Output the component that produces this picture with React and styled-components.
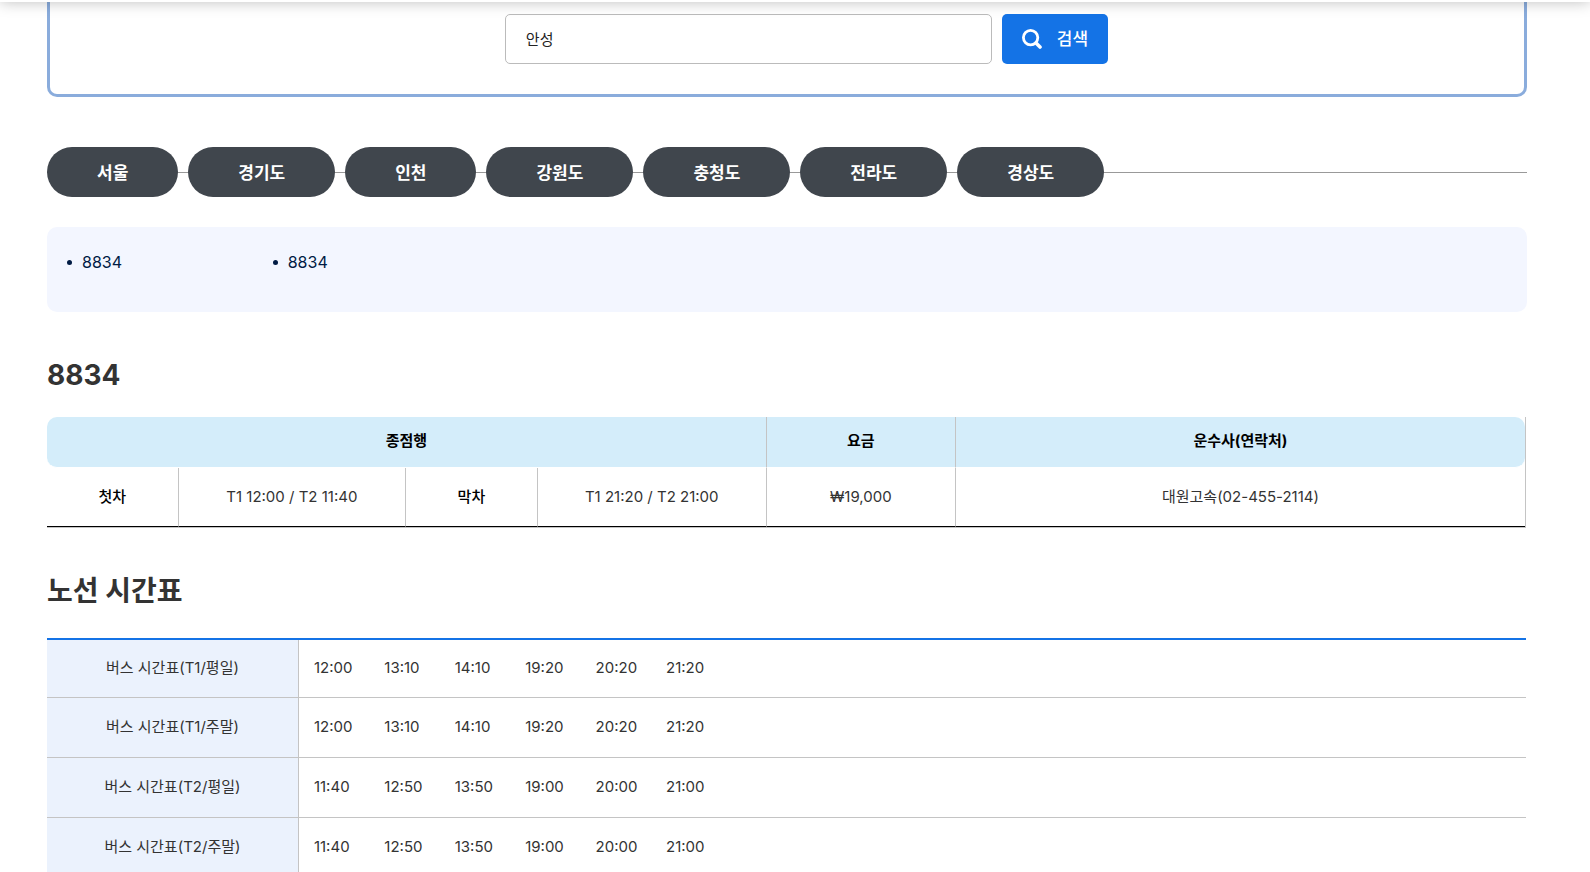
import React from "react";
import styled, { createGlobalStyle } from "styled-components";

const GlobalStyle = createGlobalStyle`
  *, *::before, *::after { box-sizing: border-box; }
  body {
    margin: 0;
    background: #fff;
    color: #333;
    font-family: Inter, "Noto Sans CJK KR", sans-serif;
    font-size: 15px;
    line-height: 24px;
  }
  button, input { font: inherit; }
`;

const Header = styled.header`
  position: sticky;
  top: -60px;
  z-index: 1;
  height: 62px;
  margin-top: -60px;
  background: #fff;
  box-shadow: 0 0 14px rgba(0, 0, 0, 0.26);
`;

const Main = styled.main`
  padding: 0 63px 40px 47px;
`;

const SearchBox = styled.form`
  display: flex;
  justify-content: center;
  gap: 10px;
  padding: 12px 0 30px 39px;
  border: 3px solid #8aacdc;
  border-top: 0;
  border-radius: 0 0 10px 10px;
`;

const SearchInput = styled.input`
  flex: 0 1 487px;
  min-width: 0;
  height: 50px;
  padding: 0 20px 2px;
  border: 1px solid #bbb;
  border-radius: 5px;
  background: #fff;
  color: #222;
`;

const SearchButton = styled.button`
  display: flex;
  align-items: center;
  gap: 15px;
  height: 50px;
  padding: 0 20px;
  border: 0;
  border-radius: 5px;
  background: #1473e6;
  color: #fff;
  font-size: 17px;
  font-weight: 500;
  white-space: nowrap;
`;

const Regions = styled.nav`
  display: flex;
  align-items: center;
  gap: 10px;
  margin-top: 50px;
  background: linear-gradient(#999, #999) 0 25px / 100% 1px no-repeat;
`;

const RegionLink = styled.a`
  padding: 14px 50px 12px;
  border-radius: 25px;
  background: #40464d;
  color: #fff;
  font-size: 17px;
  font-weight: 700;
  text-decoration: none;
  white-space: nowrap;
`;

const RouteList = styled.ul`
  display: grid;
  grid-template-columns: repeat(7, 1fr);
  margin: 30px 0 0;
  padding: 23px 20px 38px;
  border-radius: 10px;
  background: #f3f6ff;
  list-style: none;
`;

const RouteItem = styled.li`
  display: flex;
  align-items: center;
  gap: 10px;

  &::before {
    content: "";
    width: 5px;
    height: 5px;
    border-radius: 50%;
    background: #001b44;
  }
`;

const RouteLink = styled.a`
  color: #001b44;
  font-size: 16px;
  text-decoration: none;
`;

const Title = styled.h2`
  margin: 43px 0 ${(p) => p.$gap};
  font-size: 28px;
  font-weight: 700;
  line-height: 40px;
`;

const InfoTable = styled.table`
  width: calc(100% - 1px);
  table-layout: fixed;
  border-spacing: 0;
  border-right: 1px solid #c4c4c4;
  border-bottom: 1px solid #c4c4c4;
  text-align: center;
`;

const Col = styled.col`
  width: ${(p) => p.$width};
`;

const InfoHead = styled.th`
  height: 51px;
  padding: 0 0 2px;
  border-right: 1px solid #c4c4c4;
  border-bottom: 1px solid #fff;
  background: #d4edfa;
  color: #000;
  font-weight: 700;

  &:first-child { border-radius: 10px 0 0 10px; }
  &:last-child { border-right: 0; border-radius: 0 10px 10px 0; }
`;

const InfoCell = styled.td`
  height: 59px;
  padding: 0;
  border-right: 1px solid #c4c4c4;
  border-bottom: 1px solid #000;
  color: ${(p) => (p.$label ? "#000" : "#333")};
  font-weight: ${(p) => (p.$label ? 500 : 400)};

  &:last-child { border-right: 0; }
`;

const TimeTable = styled.table`
  width: calc(100% - 1px);
  table-layout: fixed;
  border-collapse: collapse;
  border-top: 2px solid #1473e6;
`;

const TimeHead = styled.th`
  height: 60px;
  padding: 0;
  border-right: 1px solid #c4c4c4;
  border-bottom: 1px solid #c4c4c4;
  background: #ebf2fd;
  font-weight: 400;

  tr:first-child > & { height: 58px; }
`;

const TimeCell = styled.td`
  padding: 0 15px;
  border-bottom: 1px solid #c4c4c4;
`;

const Times = styled.div`
  display: grid;
  grid-template-columns: repeat(17, 1fr);
`;

const SearchIcon = () => (
  <svg width="20" height="20" viewBox="0 0 20 20" fill="none" stroke="#fff" aria-hidden="true">
    <circle cx="8.6" cy="8.6" r="7.2" strokeWidth="2.8" />
    <path d="M14 14l4 4" strokeWidth="3.6" strokeLinecap="round" />
  </svg>
);

const regions = ["서울", "경기도", "인천", "강원도", "충청도", "전라도", "경상도"];

const t1 = ["12:00", "13:10", "14:10", "19:20", "20:20", "21:20"];
const t2 = ["11:40", "12:50", "13:50", "19:00", "20:00", "21:00"];

const timetable = [
  { name: "버스 시간표(T1/평일)", times: t1 },
  { name: "버스 시간표(T1/주말)", times: t1 },
  { name: "버스 시간표(T2/평일)", times: t2 },
  { name: "버스 시간표(T2/주말)", times: t2 },
];

export default function App() {
  return (
    <>
      <GlobalStyle />
      <Header />
      <Main>
        <SearchBox onSubmit={(e) => e.preventDefault()}>
          <SearchInput type="text" aria-label="검색어" defaultValue="안성" />
          <SearchButton type="submit">
            <SearchIcon />
            검색
          </SearchButton>
        </SearchBox>

        <Regions>
          {regions.map((name) => (
            <RegionLink key={name} href="#">{name}</RegionLink>
          ))}
        </Regions>

        <RouteList>
          <RouteItem><RouteLink href="#route">8834</RouteLink></RouteItem>
          <RouteItem><RouteLink href="#route">8834</RouteLink></RouteItem>
        </RouteList>

        <Title id="route" $gap="22px">8834</Title>
        <InfoTable aria-labelledby="route">
          <colgroup>
            <Col $width="8.9%" />
            <Col $width="15.4%" />
            <Col $width="8.9%" />
            <Col $width="15.5%" />
            <Col $width="12.8%" />
            <Col $width="38.5%" />
          </colgroup>
          <thead>
            <tr>
              <InfoHead scope="colgroup" colSpan={4}>종점행</InfoHead>
              <InfoHead scope="col">요금</InfoHead>
              <InfoHead scope="col">운수사(연락처)</InfoHead>
            </tr>
          </thead>
          <tbody>
            <tr>
              <InfoCell $label>첫차</InfoCell>
              <InfoCell>T1 12:00 / T2 11:40</InfoCell>
              <InfoCell $label>막차</InfoCell>
              <InfoCell>T1 21:20 / T2 21:00</InfoCell>
              <InfoCell>₩19,000</InfoCell>
              <InfoCell>대원고속(02-455-2114)</InfoCell>
            </tr>
          </tbody>
        </InfoTable>

        <Title id="timetable" $gap="27px">노선 시간표</Title>
        <TimeTable aria-labelledby="timetable">
          <colgroup>
            <Col $width="17%" />
            <Col />
          </colgroup>
          <tbody>
            {timetable.map(({ name, times }) => (
              <tr key={name}>
                <TimeHead scope="row">{name}</TimeHead>
                <TimeCell>
                  <Times>
                    {times.map((time) => (
                      <span key={time}>{time}</span>
                    ))}
                  </Times>
                </TimeCell>
              </tr>
            ))}
          </tbody>
        </TimeTable>
      </Main>
    </>
  );
}
